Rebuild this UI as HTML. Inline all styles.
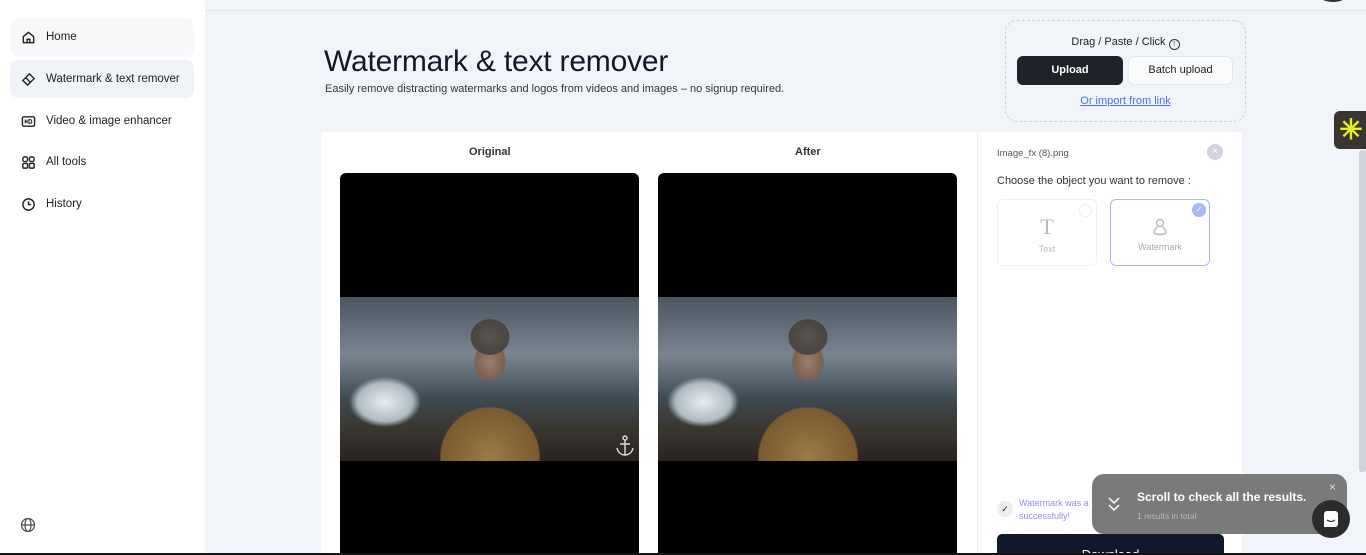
<!DOCTYPE html>
<html><head><style>
*{box-sizing:border-box;margin:0;padding:0}
html,body{width:1366px;height:555px;overflow:hidden}
body{background:#f1f4f9;font-family:"Liberation Sans",sans-serif;position:relative;color:#111827}
.side{position:absolute;left:0;top:0;width:205px;height:555px;background:#fff}
.nav{position:absolute;left:10px;width:184px;height:38px;border-radius:8px;display:flex;align-items:center;padding-left:11px;font-size:11.5px;color:#222}
.nav svg{width:15px;height:15px;margin-right:10px;fill:none;stroke:#222;stroke-width:1.5}
.topline{position:absolute;left:205px;top:10px;right:0;height:1px;background:#e2e5eb}
h1{position:absolute;left:324px;top:45px;font-size:30px;font-weight:500;color:#111827;letter-spacing:-0.2px}
.sub{position:absolute;left:325px;top:83px;font-size:11px;color:#333}
.up{position:absolute;left:1005px;top:20px;width:241px;height:102px;border:1px dashed #cfd3da;border-radius:12px}
.panel{position:absolute;left:321px;top:132px;width:921px;height:430px;background:#fff}
.div{position:absolute;left:977px;top:132px;width:1px;height:430px;background:#eceef2}
.img{position:absolute;top:173px;width:299px;height:390px;background:#000;border-radius:6px;overflow:hidden}
.photo{position:absolute;top:124px;left:0;width:299px;height:164px;background:
radial-gradient(ellipse 24px 22px at 150px 40px,#5a5450 0,#4a4440 80%,transparent 82%),
radial-gradient(ellipse 22px 26px at 150px 65px,#9a7e6e 0,#7a6050 70%,transparent 72%),
radial-gradient(ellipse 70px 70px at 150px 160px,#9a7a48 0,#7a5a30 70%,transparent 72%),
radial-gradient(ellipse 50px 35px at 45px 105px,#e8eef2 0,#aebac2 55%,transparent 72%),
linear-gradient(#4c5662 0,#7a8490 35%,#5a6670 50%,#3e4a52 62%,#3a3630 80%,#2a2420 100%)}
.lbl{position:absolute;top:146px;font-size:11px;color:#333;font-weight:600}
.card{position:absolute;top:199px;width:100px;height:67px;border:1px solid #eef0f3;border-radius:6px;text-align:center;font-size:9px;color:#bbb}
.toast{position:absolute;left:1092px;top:474px;width:255px;height:60px;background:#7a7a7a;border-radius:12px;color:#fff}
</style></head><body>
<div class="side">
<div class="nav" style="top:18px;background:#f7f8fa"><svg viewBox="0 0 16 16"><path d="M2.5 7L8 2.5 13.5 7V13.5H2.5Z"/><path d="M6.5 13.5V10H9.5V13.5"/></svg>Home</div>
<div class="nav" style="top:60px;background:#f0f3f8"><svg viewBox="0 0 16 16"><path d="M2 9L9 2L14 7L7 14Z M5 6L10 11"/></svg>Watermark &amp; text remover</div>
<div class="nav" style="top:102px"><svg viewBox="0 0 16 16"><rect x="1.5" y="3" width="13" height="10" rx="1.5"/><path d="M4.5 6V10M4.5 8H6.5M6.5 6V10M8.5 6V10H10a1.5 2 0 000-4Z" stroke-width="1.1"/></svg>Video &amp; image enhancer</div>
<div class="nav" style="top:143px"><svg viewBox="0 0 16 16"><rect x="2" y="2" width="5" height="5" rx="2"/><rect x="9" y="2" width="5" height="5" rx="2"/><rect x="2" y="9" width="5" height="5" rx="1"/><rect x="9" y="9" width="5" height="5" rx="1"/></svg>All tools</div>
<div class="nav" style="top:185px"><svg viewBox="0 0 16 16"><circle cx="8" cy="8" r="6"/><path d="M8 4.5V8H10.5"/></svg>History</div>
<svg style="position:absolute;left:20px;top:517px" width="16" height="16" viewBox="0 0 16 16" fill="none" stroke="#555" stroke-width="1.3"><circle cx="8" cy="8" r="6.5"/><ellipse cx="8" cy="8" rx="3" ry="6.5"/><path d="M1.5 8H14.5"/></svg>
</div>
<div class="topline"></div>
<div style="position:absolute;left:1320px;top:-10px;width:26px;height:12px;border-radius:50%;background:#333"></div>
<h1>Watermark &amp; text remover</h1>
<div class="sub">Easily remove distracting watermarks and logos from videos and images – no signup required.</div>
<div class="up">
<div style="position:absolute;top:15px;width:100%;text-align:center;font-size:11px;color:#222">Drag / Paste / Click <span style="display:inline-block;width:11px;height:11px;border:1.3px solid #333;border-radius:50%;font-size:7px;line-height:9px;vertical-align:-1px">!</span></div>
<div style="position:absolute;left:11px;top:35px;width:106px;height:29px;background:#1f2228;border-radius:6px;color:#fff;font-size:11px;font-weight:bold;text-align:center;line-height:29px">Upload</div>
<div style="position:absolute;left:122px;top:35px;width:105px;height:29px;background:#fafbfc;border:1px solid #e5e7eb;border-radius:6px;color:#222;font-size:11px;text-align:center;line-height:27px">Batch upload</div>
<div style="position:absolute;top:74px;width:100%;text-align:center;font-size:11px;color:#4f6ef7;text-decoration:underline">Or import from link</div>
</div>
<div style="position:absolute;left:1334px;top:111px;width:34px;height:38px;background:#3a3530;border-radius:6px 0 0 6px;color:#e4ee20;font-size:28px;line-height:38px;text-align:center;font-weight:bold">✳</div>
<div style="position:absolute;left:1359px;top:150px;width:7px;height:322px;background:#cfd3dc;border-radius:3px"></div>
<div class="panel"></div><div class="div"></div>
<div class="lbl" style="left:469px">Original</div><div class="lbl" style="left:795px">After</div>
<div class="img" style="left:340px"><div class="photo"></div><svg style="position:absolute;left:275px;top:262px" width="20" height="22" viewBox="0 0 20 22" fill="none" stroke="#ddd" stroke-width="1.4"><circle cx="10" cy="3" r="2"/><path d="M10 5V20M5 9H15M2 13C3 18 7 20 10 20 13 20 17 18 18 13"/></svg></div>
<div class="img" style="left:658px"><div class="photo"></div></div>
<div style="position:absolute;left:997px;top:148px;font-size:9.5px;color:#555">Image_fx (8).png</div>
<div style="position:absolute;left:1207px;top:144px;width:16px;height:16px;border-radius:50%;background:#d1d5db;color:#fff;font-size:10px;text-align:center;line-height:16px">×</div>
<div style="position:absolute;left:997px;top:175px;font-size:11px;color:#333">Choose the object you want to remove :</div>
<div class="card" style="left:997px"><div style="font-size:22px;color:#bbb;margin-top:16px;font-family:'Liberation Serif',serif;line-height:22px">T</div><div style="margin-top:6px">Text</div><div style="position:absolute;right:4px;top:4px;width:13px;height:13px;border:1px solid #eee;border-radius:50%"></div></div>
<div class="card" style="left:1110px;border-color:#a9b6f5"><svg style="margin-top:18px" width="16" height="18" viewBox="0 0 16 18" fill="none" stroke="#bbb" stroke-width="1.4"><circle cx="8" cy="5" r="3.5"/><path d="M5 8.5C5 11 2 11 2 14 2 16 4 16.5 8 16.5 12 16.5 14 16 14 14 14 11 11 11 11 8.5"/></svg><div style="margin-top:4px;color:#aaa">Watermark</div><div style="position:absolute;right:3px;top:3px;width:14px;height:14px;background:#a9b6f5;border-radius:50%;color:#fff;font-size:8px;line-height:14px">✓</div></div>
<div style="position:absolute;left:997px;top:501px;width:16px;height:16px;border-radius:50%;background:#eee;font-size:9px;text-align:center;line-height:16px">✓</div>
<div style="position:absolute;left:1019px;top:497px;font-size:9px;color:#8f8ff5;line-height:13px">Watermark was a<br>successfully!</div>
<div style="position:absolute;left:997px;top:534px;width:227px;height:30px;background:#111827;border-radius:5px;color:#fff;font-size:13px;text-align:center;padding-top:13px">Download</div>
<div class="toast">
<svg style="position:absolute;left:15px;top:22px" width="14" height="16" viewBox="0 0 14 16" fill="none" stroke="#fff" stroke-width="1.5"><path d="M2 2L7 7 12 2M2 9L7 14 12 9"/></svg>
<div style="position:absolute;left:45px;top:16px;font-size:12px;font-weight:bold">Scroll to check all the results.</div>
<div style="position:absolute;left:45px;top:37px;font-size:8.5px;color:#bbb">1 results in total</div>
<div style="position:absolute;right:11px;top:6px;font-size:12px;color:#ddd">×</div>
</div>
<div style="position:absolute;left:1312px;top:500px;width:38px;height:38px;border-radius:50%;background:#2b2b2b"><div style="position:absolute;left:12px;top:11px;width:14px;height:16px;background:#fff;border-radius:3px 3px 3px 0"></div><svg style="position:absolute;left:14px;top:19px" width="10" height="4" viewBox="0 0 10 4" fill="none" stroke="#2b2b2b" stroke-width="1.2"><path d="M1 1Q5 4 9 1"/></svg></div>
<div style="position:absolute;left:0;top:553px;width:1366px;height:2px;background:#111"></div>
</body></html>
